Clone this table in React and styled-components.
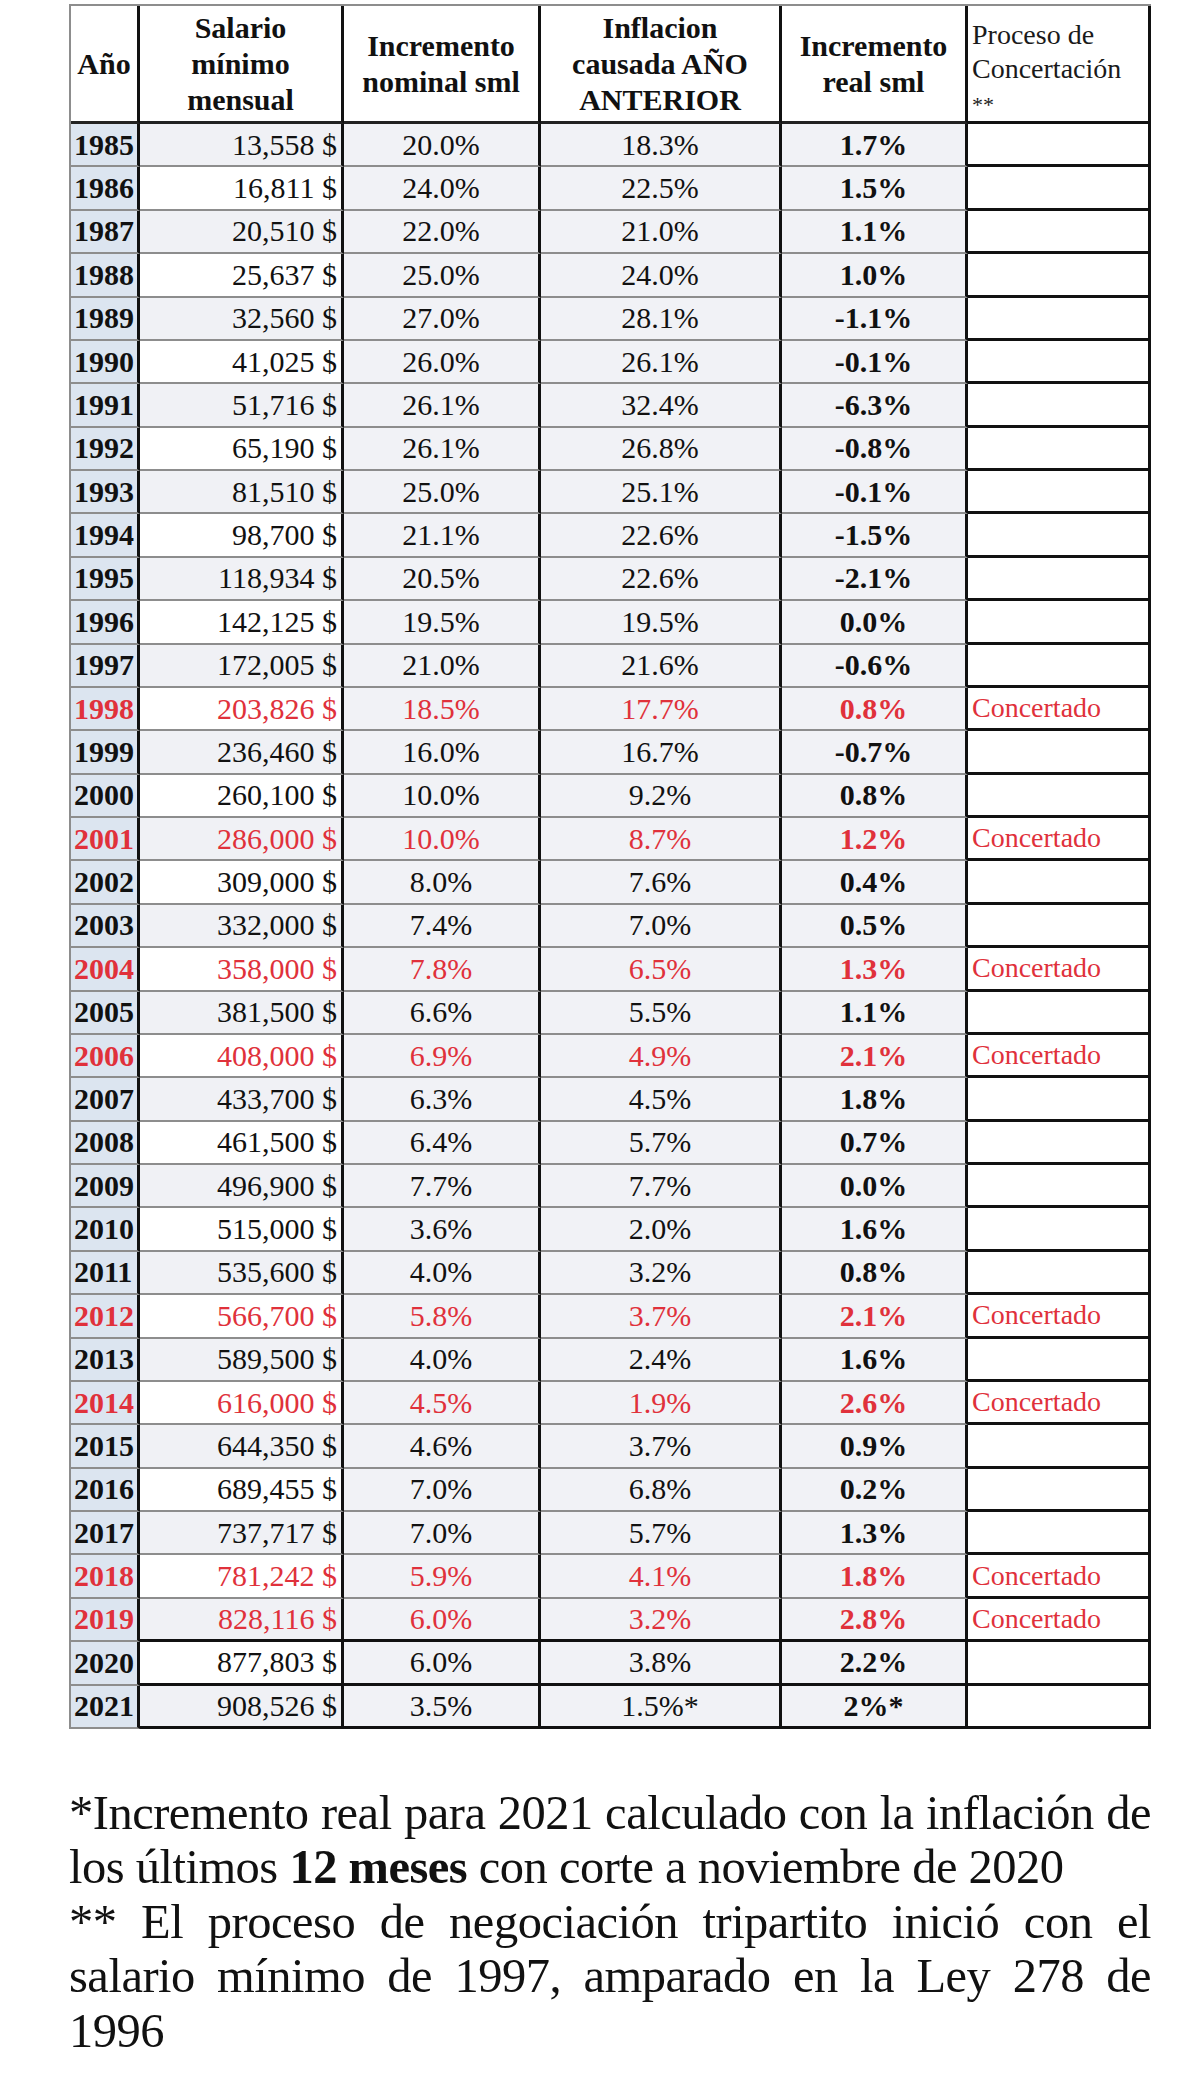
import styled, { createGlobalStyle } from 'styled-components';

const GlobalStyle = createGlobalStyle`
  html, body {
    margin: 0;
    padding: 0;
    background: #fff;
  }
  body {
    font-family: "Liberation Serif", "Times New Roman", serif;
    color: #111;
  }
`;

const RED = '#e0313b';
const INK = '#111';
const LINE = '#8d8d8d';

const rows = [
  ['1985', '13,558', '20.0%', '18.3%', '1.7%'],
  ['1986', '16,811', '24.0%', '22.5%', '1.5%'],
  ['1987', '20,510', '22.0%', '21.0%', '1.1%'],
  ['1988', '25,637', '25.0%', '24.0%', '1.0%'],
  ['1989', '32,560', '27.0%', '28.1%', '-1.1%'],
  ['1990', '41,025', '26.0%', '26.1%', '-0.1%'],
  ['1991', '51,716', '26.1%', '32.4%', '-6.3%'],
  ['1992', '65,190', '26.1%', '26.8%', '-0.8%'],
  ['1993', '81,510', '25.0%', '25.1%', '-0.1%'],
  ['1994', '98,700', '21.1%', '22.6%', '-1.5%'],
  ['1995', '118,934', '20.5%', '22.6%', '-2.1%'],
  ['1996', '142,125', '19.5%', '19.5%', '0.0%'],
  ['1997', '172,005', '21.0%', '21.6%', '-0.6%'],
  ['1998', '203,826', '18.5%', '17.7%', '0.8%', true],
  ['1999', '236,460', '16.0%', '16.7%', '-0.7%'],
  ['2000', '260,100', '10.0%', '9.2%', '0.8%'],
  ['2001', '286,000', '10.0%', '8.7%', '1.2%', true],
  ['2002', '309,000', '8.0%', '7.6%', '0.4%'],
  ['2003', '332,000', '7.4%', '7.0%', '0.5%'],
  ['2004', '358,000', '7.8%', '6.5%', '1.3%', true],
  ['2005', '381,500', '6.6%', '5.5%', '1.1%'],
  ['2006', '408,000', '6.9%', '4.9%', '2.1%', true],
  ['2007', '433,700', '6.3%', '4.5%', '1.8%'],
  ['2008', '461,500', '6.4%', '5.7%', '0.7%'],
  ['2009', '496,900', '7.7%', '7.7%', '0.0%'],
  ['2010', '515,000', '3.6%', '2.0%', '1.6%'],
  ['2011', '535,600', '4.0%', '3.2%', '0.8%'],
  ['2012', '566,700', '5.8%', '3.7%', '2.1%', true],
  ['2013', '589,500', '4.0%', '2.4%', '1.6%'],
  ['2014', '616,000', '4.5%', '1.9%', '2.6%', true],
  ['2015', '644,350', '4.6%', '3.7%', '0.9%'],
  ['2016', '689,455', '7.0%', '6.8%', '0.2%'],
  ['2017', '737,717', '7.0%', '5.7%', '1.3%'],
  ['2018', '781,242', '5.9%', '4.1%', '1.8%', true],
  ['2019', '828,116', '6.0%', '3.2%', '2.8%', true],
  ['2020', '877,803', '6.0%', '3.8%', '2.2%'],
  ['2021', '908,526', '3.5%', '1.5%*', '2%*'],
];

const Page = styled.main`
  width: 1200px;
  min-height: 2093px;
  box-sizing: border-box;
  padding: 4px 49px 0 69px;
`;

const Table = styled.div`
  display: grid;
  grid-template-columns: 69px 204px 197px 241px 186px 183px;
  grid-template-rows: 118px;
  grid-auto-rows: 43.38px;
  border-top: 2px solid ${LINE};
  border-left: 2px solid ${LINE};
`;

const HeadCell = styled.div`
  box-sizing: border-box;
  display: flex;
  align-items: center;
  justify-content: center;
  text-align: center;
  border-right: 3px solid ${INK};
  border-bottom: 3px solid #222;
  font-weight: 700;
  font-size: 30px;
  line-height: 36px;
  background: #fff;
`;

const NoteHead = styled.div`
  box-sizing: border-box;
  padding: 12px 4px 0 4px;
  border-right: 3px solid ${INK};
  border-bottom: 3px solid ${INK};
  font-size: 28px;
  line-height: 34px;
  color: #1a1a1a;
`;

const Stars = styled.span`
  font-size: 22px;
`;

const Cell = styled.div`
  box-sizing: border-box;
  display: flex;
  align-items: center;
  border-right: 3px solid ${INK};
  border-bottom: ${p => (p.$dark ? `3px solid ${INK}` : `2px solid ${LINE}`)};
  color: ${p => (p.$red ? RED : INK)};
  font-size: 30px;
  white-space: nowrap;
`;

const YearCell = styled(Cell)`
  padding-left: 3px;
  font-weight: 700;
  background: #dce5f0;
  border-bottom: 2px solid ${LINE};
`;

const SalaryCell = styled(Cell)`
  justify-content: flex-end;
  padding-right: 4px;
  background: ${p => (p.$stripe ? '#f0f1f5' : '#fff')};
`;

const PercentCell = styled(Cell)`
  justify-content: center;
  font-weight: ${p => (p.$bold ? 700 : 400)};
  background: #f1f2f6;
`;

const NoteCell = styled(Cell)`
  padding-left: 4px;
  font-size: 28px;
  background: #fff;
  border-bottom: 3px solid ${INK};
`;

const Notes = styled.div`
  margin-top: 57px;
  font-size: 48.5px;
  line-height: 54.5px;
  letter-spacing: -0.5px;
  text-align: justify;
  color: ${INK};
`;

const Note = styled.p`
  margin: 0;
`;

const Strong = styled.b`
  font-weight: 700;
  line-height: 1;
`;

export default function App() {
  return (
    <>
      <GlobalStyle />
      <Page>
        <Table>
          <HeadCell>Año</HeadCell>
          <HeadCell>
            Salario
            <br />
            mínimo
            <br />
            mensual
          </HeadCell>
          <HeadCell>
            Incremento
            <br />
            nominal sml
          </HeadCell>
          <HeadCell>
            Inflacion
            <br />
            causada AÑO
            <br />
            ANTERIOR
          </HeadCell>
          <HeadCell>
            Incremento
            <br />
            real sml
          </HeadCell>
          <NoteHead>
            Proceso de
            <br />
            Concertación
            <br />
            <Stars>**</Stars>
          </NoteHead>

          {rows.map(([year, salary, nominal, inflation, real, agreed], i) => {
            const dark = Number(year) >= 2019;
            return [
              <YearCell key={year + 'y'} $red={agreed}>
                {year}
              </YearCell>,
              <SalaryCell key={year + 's'} $red={agreed} $dark={dark} $stripe={i % 2 === 0}>
                {salary} $
              </SalaryCell>,
              <PercentCell key={year + 'n'} $red={agreed} $dark={dark}>
                {nominal}
              </PercentCell>,
              <PercentCell key={year + 'i'} $red={agreed} $dark={dark}>
                {inflation}
              </PercentCell>,
              <PercentCell key={year + 'r'} $red={agreed} $dark={dark} $bold>
                {real}
              </PercentCell>,
              <NoteCell key={year + 'c'} $red={agreed}>
                {agreed ? 'Concertado' : ''}
              </NoteCell>,
            ];
          })}
        </Table>

        <Notes>
          <Note>
            *Incremento real para 2021 calculado con la inflación de los últimos{' '}
            <Strong>12 meses</Strong> con corte a noviembre de 2020
          </Note>
          <Note>
            ** El proceso de negociación tripartito inició con el salario mínimo de 1997, amparado en
            la Ley 278 de 1996
          </Note>
        </Notes>
      </Page>
    </>
  );
}
